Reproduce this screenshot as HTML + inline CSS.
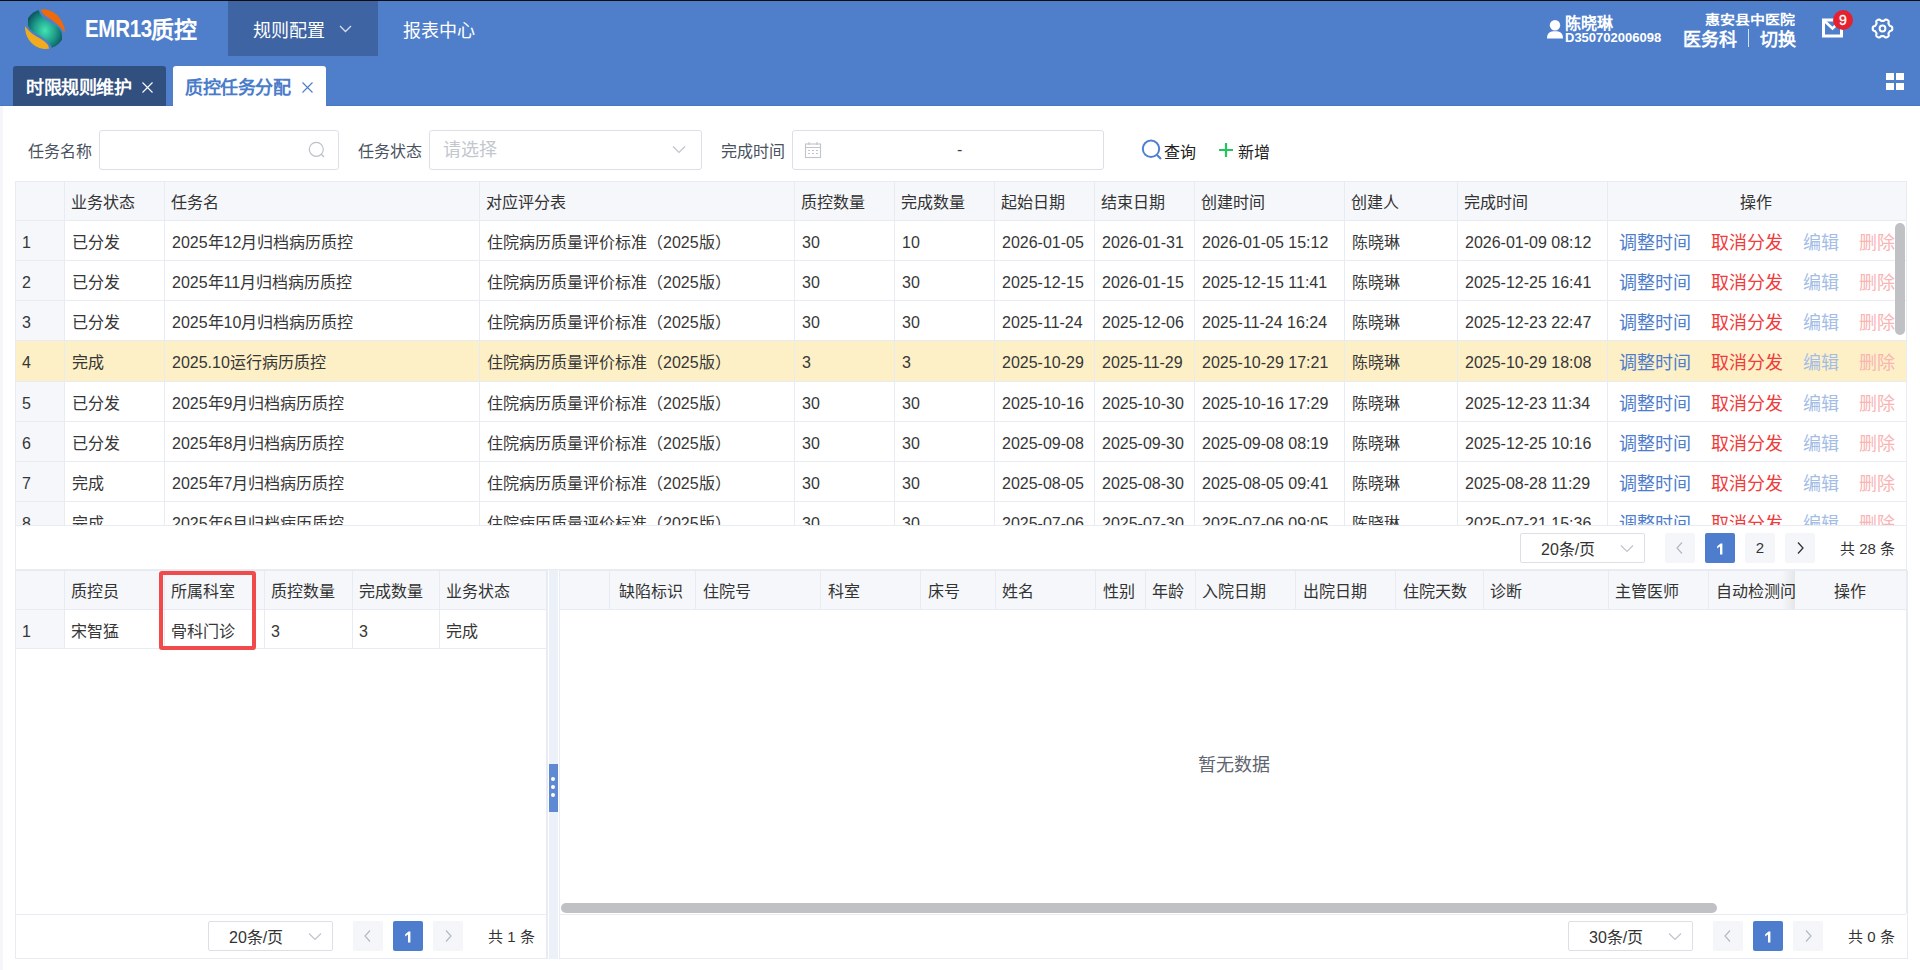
<!DOCTYPE html><html lang="zh-CN"><head><meta charset="utf-8"><style>
*{box-sizing:border-box;margin:0;padding:0}
html,body{width:1920px;height:970px;overflow:hidden;background:#fff;font-family:"Liberation Sans",sans-serif;color:#333}
.abs{position:absolute}
.w{color:#fff}
.t16{font-size:16px;line-height:20px;white-space:nowrap}
.t18{font-size:18px;line-height:22px;white-space:nowrap}
.lbl{font-size:16px;color:#4a5260;line-height:20px;white-space:nowrap}
.inp{border:1px solid #dcdfe6;border-radius:3px;background:#fff}
.hl{background:#e9edf4}
.th{background:#f5f7fa}
.cell{position:absolute;margin-top:2px;font-size:16px;line-height:20px;white-space:nowrap;color:#363636}
.hd{color:#333}
.blue{color:#4d7dcc}
.red{color:#f03c3c}
.lblue{color:#a3bde6}
.lred{color:#f9b4b4}
.pgbtn{position:absolute;width:30px;height:30px;background:#f4f6fa;border-radius:2px}
.pgact{background:#4d7dcc;color:#fff;font-weight:bold;font-size:16px;text-align:center;line-height:31px}
.sel{position:absolute;border:1px solid #dcdfe6;border-radius:2px;background:#fff;font-size:16px;line-height:32px;color:#333}
</style></head><body>
<div class="abs" style="left:0;top:0;width:1920px;height:1px;background:#0d0d0d"></div>
<div class="abs" style="left:0;top:1px;width:1920px;height:105px;background:#4f7fcb"></div>
<div class="abs" style="left:0;top:105px;width:1920px;height:1px;background:#4877c4"></div>
<div class="abs" style="left:228px;top:1px;width:150px;height:55px;background:#3e64a3"></div>
<svg class="abs" style="left:25px;top:9px" width="40" height="40" viewBox="0 0 40 40">
<defs><radialGradient id="tg" cx="0.5" cy="0.55" r="0.6"><stop offset="0" stop-color="#43e3b4"/><stop offset="0.55" stop-color="#1d9a88"/><stop offset="1" stop-color="#064c58"/></radialGradient>
<clipPath id="cc"><circle cx="20" cy="20" r="20"/></clipPath></defs>
<g clip-path="url(#cc)">
<path d="M3,2 C10,-2 14,1 14,2 C16,8 22,12 28,15 C34,18 37,22 37,27 L37,34 C33,38 30,39 27,39 C24,32 18,28 12,25 C6,22 3,19 3,15 Z" fill="url(#tg)"/>
<path d="M16,0 C28,0 38,8 40,22 L40,24 C36,18 30,13 24,9 C20,7 16,4 16,0 Z" fill="#ee6a0a"/>
<path d="M0,17 C4,23 10,27 16,30 C21,33 24,36 24,40 L18,40 C8,38 1,30 0,20 Z" fill="#f0ac1c"/>
</g></svg>
<div class="abs w" style="left:85px;top:17px;font-size:20.5px;line-height:26px;font-weight:bold;white-space:nowrap;letter-spacing:-0.3px;transform:scaleY(1.13);transform-origin:0 19px">EMR13</div>
<div class="abs w" style="left:151px;top:17px;font-size:23px;line-height:26px;font-weight:bold;white-space:nowrap">质控</div>
<div class="abs w t18" style="left:253px;top:20px">规则配置</div>
<svg class="abs" style="left:339px;top:25px" width="13" height="8" viewBox="0 0 13 8"><path d="M1,1 L6.5,6.5 L12,1" fill="none" stroke="#d6def0" stroke-width="1.3"/></svg>
<div class="abs w t18" style="left:403px;top:20px">报表中心</div>
<svg class="abs" style="left:1547px;top:20px" width="16" height="19" viewBox="0 0 16 19"><circle cx="8" cy="5.2" r="5.2" fill="#fff"/><path d="M0,18.5 C0,13 3,11.3 8,11.3 C13,11.3 16,13 16,18.5 Z" fill="#fff"/></svg>
<div class="abs w" style="left:1565px;top:15px;font-size:16px;line-height:18px;font-weight:bold;white-space:nowrap">陈晓琳</div>
<div class="abs w" style="left:1565px;top:30px;font-size:13px;line-height:16px;font-weight:bold;white-space:nowrap">D350702006098</div>
<div class="abs w" style="left:1705px;top:11px;font-size:15px;line-height:18px;font-weight:bold;white-space:nowrap;transform:scaleY(0.86);transform-origin:0 9px">惠安县中医院</div>
<div class="abs w" style="left:1683px;top:29px;font-size:18px;line-height:22px;font-weight:bold;white-space:nowrap">医务科</div>
<div class="abs" style="left:1748px;top:29px;width:1px;height:18px;background:#d8e0f0"></div>
<div class="abs w" style="left:1760px;top:29px;font-size:18px;line-height:22px;font-weight:bold;white-space:nowrap">切换</div>
<svg class="abs" style="left:1821px;top:17px" width="24" height="23" viewBox="0 0 24 23"><rect x="2.5" y="3" width="18" height="16" fill="none" stroke="#fff" stroke-width="3"/><path d="M3,3.5 L11.5,11.5 L20,3.5" fill="none" stroke="#fff" stroke-width="2.6"/></svg>
<div class="abs" style="left:1833px;top:10px;width:20px;height:20px;border-radius:50%;background:#e4222f;color:#fff;font-size:14px;line-height:20px;text-align:center;font-weight:normal;-webkit-text-stroke:0.3px #fff">9</div>
<svg class="abs" style="left:1870px;top:15.5px" width="25" height="25" viewBox="0 0 25 25"><path d="M22.30,12.50 L22.29,12.93 L22.24,13.35 L22.15,13.77 L21.96,14.17 L21.56,14.51 L20.90,14.75 L20.24,14.94 L19.83,15.17 L19.59,15.43 L19.41,15.72 L19.25,16.01 L19.08,16.30 L18.91,16.59 L18.74,16.87 L18.58,17.17 L18.47,17.51 L18.49,17.99 L18.65,18.65 L18.77,19.34 L18.67,19.86 L18.42,20.22 L18.11,20.51 L17.76,20.76 L17.40,20.99 L17.02,21.19 L16.63,21.36 L16.22,21.49 L15.78,21.52 L15.29,21.35 L14.75,20.90 L14.26,20.43 L13.85,20.18 L13.50,20.10 L13.16,20.09 L12.83,20.10 L12.50,20.10 L12.17,20.10 L11.84,20.09 L11.50,20.10 L11.15,20.18 L10.74,20.43 L10.25,20.90 L9.71,21.35 L9.22,21.52 L8.78,21.49 L8.37,21.36 L7.98,21.19 L7.60,20.99 L7.24,20.76 L6.89,20.51 L6.58,20.22 L6.33,19.86 L6.23,19.34 L6.35,18.65 L6.51,17.99 L6.53,17.51 L6.42,17.17 L6.26,16.87 L6.09,16.59 L5.92,16.30 L5.75,16.01 L5.59,15.72 L5.41,15.43 L5.17,15.17 L4.76,14.94 L4.10,14.75 L3.44,14.51 L3.04,14.17 L2.85,13.77 L2.76,13.35 L2.71,12.93 L2.70,12.50 L2.71,12.07 L2.76,11.65 L2.85,11.23 L3.04,10.83 L3.44,10.49 L4.10,10.25 L4.76,10.06 L5.17,9.83 L5.41,9.57 L5.59,9.28 L5.75,8.99 L5.92,8.70 L6.09,8.41 L6.26,8.13 L6.42,7.83 L6.53,7.49 L6.51,7.01 L6.35,6.35 L6.23,5.66 L6.33,5.14 L6.58,4.78 L6.89,4.49 L7.24,4.24 L7.60,4.01 L7.98,3.81 L8.37,3.64 L8.78,3.51 L9.22,3.48 L9.71,3.65 L10.25,4.10 L10.74,4.57 L11.15,4.82 L11.50,4.90 L11.84,4.91 L12.17,4.90 L12.50,4.90 L12.83,4.90 L13.16,4.91 L13.50,4.90 L13.85,4.82 L14.26,4.57 L14.75,4.10 L15.29,3.65 L15.78,3.48 L16.22,3.51 L16.63,3.64 L17.02,3.81 L17.40,4.01 L17.76,4.24 L18.11,4.49 L18.42,4.78 L18.67,5.14 L18.77,5.66 L18.65,6.35 L18.49,7.01 L18.47,7.49 L18.58,7.83 L18.74,8.13 L18.91,8.41 L19.08,8.70 L19.25,8.99 L19.41,9.28 L19.59,9.57 L19.83,9.83 L20.24,10.06 L20.90,10.25 L21.56,10.49 L21.96,10.83 L22.15,11.23 L22.24,11.65 L22.29,12.07 L22.30,12.50Z" fill="none" stroke="#fff" stroke-width="2.1" stroke-linejoin="round"/><circle cx="12.5" cy="12.5" r="2.9" fill="none" stroke="#fff" stroke-width="2"/></svg>
<div class="abs" style="left:13px;top:66px;width:153px;height:40px;background:#32507f;border-radius:3px 3px 0 0"></div>
<div class="abs w t18" style="left:26px;top:77px;letter-spacing:-0.5px;font-weight:bold">时限规则维护</div>
<svg class="abs" style="left:141px;top:81px" width="13" height="13" viewBox="0 0 13 13"><path d="M1.5,1.5 L11.5,11.5 M11.5,1.5 L1.5,11.5" stroke="#fff" stroke-width="1.1"/></svg>
<div class="abs" style="left:173px;top:66px;width:153px;height:40px;background:#fff;border-radius:3px 3px 0 0"></div>
<div class="abs t18" style="left:185px;top:77px;letter-spacing:-0.4px;font-weight:bold;color:#4a7cca">质控任务分配</div>
<svg class="abs" style="left:301px;top:81px" width="13" height="13" viewBox="0 0 13 13"><path d="M1.5,1.5 L11.5,11.5 M11.5,1.5 L1.5,11.5" stroke="#4a7cca" stroke-width="1.1"/></svg>
<div class="abs" style="left:1886px;top:73px;width:8px;height:7px;background:#fff"></div>
<div class="abs" style="left:1896px;top:73px;width:8px;height:7px;background:#fff"></div>
<div class="abs" style="left:1886px;top:83px;width:8px;height:7px;background:#fff"></div>
<div class="abs" style="left:1896px;top:83px;width:8px;height:7px;background:#fff"></div>
<div class="abs" style="left:0;top:106px;width:3px;height:864px;background:#f4f6f9"></div>
<div class="abs lbl" style="left:28px;top:142px">任务名称</div>
<div class="abs inp" style="left:99px;top:130px;width:240px;height:40px"></div>
<svg class="abs" style="left:307px;top:140px" width="20" height="20" viewBox="0 0 20 20"><circle cx="9.3" cy="9.3" r="7" fill="none" stroke="#bcc1c9" stroke-width="1.2"/><path d="M14.3,14.3 L17,17" stroke="#bcc1c9" stroke-width="1.3"/></svg>
<div class="abs lbl" style="left:358px;top:142px">任务状态</div>
<div class="abs inp" style="left:429px;top:130px;width:273px;height:40px"></div>
<div class="abs" style="left:443px;top:139px;font-size:18px;line-height:22px;color:#c3c7ce;white-space:nowrap">请选择</div>
<svg class="abs" style="left:672px;top:145px" width="14" height="9" viewBox="0 0 14 9"><path d="M1,1.5 L7,7.5 L13,1.5" fill="none" stroke="#bfc3ca" stroke-width="1.2"/></svg>
<div class="abs lbl" style="left:721px;top:142px">完成时间</div>
<div class="abs inp" style="left:792px;top:130px;width:312px;height:40px"></div>
<svg class="abs" style="left:804px;top:141px" width="18" height="18" viewBox="0 0 18 18"><rect x="1.5" y="3" width="15" height="13.5" fill="none" stroke="#c0c4cc" stroke-width="1.1"/><path d="M1.5,6.5 H16.5 M5,1 V4 M13,1 V4" stroke="#c0c4cc" stroke-width="1.1"/><path d="M4,9.5 H6 M8,9.5 H10 M12,9.5 H14 M4,12.5 H6 M8,12.5 H10 M12,12.5 H14" stroke="#c0c4cc" stroke-width="1"/></svg>
<div class="abs" style="left:957px;top:140px;font-size:16px;line-height:20px;color:#444">-</div>
<svg class="abs" style="left:1141px;top:139px" width="22" height="22" viewBox="0 0 22 22"><circle cx="10" cy="9.8" r="8.2" fill="none" stroke="#4f7fd0" stroke-width="2"/><path d="M16,16 L20,20" stroke="#4f7fd0" stroke-width="2.2"/></svg>
<div class="abs t16" style="left:1164px;top:143px;color:#222">查询</div>
<svg class="abs" style="left:1218px;top:142px" width="16" height="16" viewBox="0 0 16 16"><path d="M8,1 V15 M1,8 H15" stroke="#22c55e" stroke-width="2.2"/></svg>
<div class="abs t16" style="left:1238px;top:143px;color:#222">新增</div>
<div class="abs" style="left:15px;top:181px;width:1892px;height:389px;border:1px solid #e8ebf2;border-bottom:none"></div>
<div class="abs th" style="left:16px;top:182px;width:1890px;height:38px"></div>
<div class="abs" style="left:16px;top:220px;width:1890px;height:1px;background:#e8ebf2"></div>
<div class="abs" style="left:16px;top:221px;width:1890px;height:304px;overflow:hidden">
<div class="abs th" style="left:0;top:0;width:48px;height:330px"></div>
<div class="abs" style="left:0;top:39px;width:1890px;height:1px;background:#e8ebf2"></div>
<div class="cell" style="left:6px;top:10px">1</div>
<div class="cell" style="left:56px;top:10px">已分发</div>
<div class="cell" style="left:156px;top:10px">2025年12月归档病历质控</div>
<div class="cell" style="left:471px;top:10px">住院病历质量评价标准（2025版）</div>
<div class="cell" style="left:786px;top:10px">30</div>
<div class="cell" style="left:886px;top:10px">10</div>
<div class="cell" style="left:986px;top:10px">2026-01-05</div>
<div class="cell" style="left:1086px;top:10px">2026-01-31</div>
<div class="cell" style="left:1186px;top:10px">2026-01-05 15:12</div>
<div class="cell" style="left:1336px;top:10px">陈晓琳</div>
<div class="cell" style="left:1449px;top:10px">2026-01-09 08:12</div>
<div class="cell t18 blue" style="left:1603px;top:9px;font-size:18px;line-height:22px">调整时间</div>
<div class="cell t18 red" style="left:1695px;top:9px;font-size:18px;line-height:22px">取消分发</div>
<div class="cell t18 lblue" style="left:1787px;top:9px;font-size:18px;line-height:22px">编辑</div>
<div class="cell t18 lred" style="left:1843px;top:9px;font-size:18px;line-height:22px;width:36px;overflow:hidden">删除</div>
<div class="abs" style="left:0;top:79px;width:1890px;height:1px;background:#e8ebf2"></div>
<div class="cell" style="left:6px;top:50px">2</div>
<div class="cell" style="left:56px;top:50px">已分发</div>
<div class="cell" style="left:156px;top:50px">2025年11月归档病历质控</div>
<div class="cell" style="left:471px;top:50px">住院病历质量评价标准（2025版）</div>
<div class="cell" style="left:786px;top:50px">30</div>
<div class="cell" style="left:886px;top:50px">30</div>
<div class="cell" style="left:986px;top:50px">2025-12-15</div>
<div class="cell" style="left:1086px;top:50px">2026-01-15</div>
<div class="cell" style="left:1186px;top:50px">2025-12-15 11:41</div>
<div class="cell" style="left:1336px;top:50px">陈晓琳</div>
<div class="cell" style="left:1449px;top:50px">2025-12-25 16:41</div>
<div class="cell t18 blue" style="left:1603px;top:49px;font-size:18px;line-height:22px">调整时间</div>
<div class="cell t18 red" style="left:1695px;top:49px;font-size:18px;line-height:22px">取消分发</div>
<div class="cell t18 lblue" style="left:1787px;top:49px;font-size:18px;line-height:22px">编辑</div>
<div class="cell t18 lred" style="left:1843px;top:49px;font-size:18px;line-height:22px;width:36px;overflow:hidden">删除</div>
<div class="abs" style="left:0;top:119px;width:1890px;height:1px;background:#e8ebf2"></div>
<div class="cell" style="left:6px;top:90px">3</div>
<div class="cell" style="left:56px;top:90px">已分发</div>
<div class="cell" style="left:156px;top:90px">2025年10月归档病历质控</div>
<div class="cell" style="left:471px;top:90px">住院病历质量评价标准（2025版）</div>
<div class="cell" style="left:786px;top:90px">30</div>
<div class="cell" style="left:886px;top:90px">30</div>
<div class="cell" style="left:986px;top:90px">2025-11-24</div>
<div class="cell" style="left:1086px;top:90px">2025-12-06</div>
<div class="cell" style="left:1186px;top:90px">2025-11-24 16:24</div>
<div class="cell" style="left:1336px;top:90px">陈晓琳</div>
<div class="cell" style="left:1449px;top:90px">2025-12-23 22:47</div>
<div class="cell t18 blue" style="left:1603px;top:89px;font-size:18px;line-height:22px">调整时间</div>
<div class="cell t18 red" style="left:1695px;top:89px;font-size:18px;line-height:22px">取消分发</div>
<div class="cell t18 lblue" style="left:1787px;top:89px;font-size:18px;line-height:22px">编辑</div>
<div class="cell t18 lred" style="left:1843px;top:89px;font-size:18px;line-height:22px;width:36px;overflow:hidden">删除</div>
<div class="abs" style="left:0;top:120px;width:1890px;height:40px;background:#fdf0c6"></div>
<div class="abs" style="left:0;top:160px;width:1890px;height:1px;background:#e8ebf2"></div>
<div class="cell" style="left:6px;top:130px">4</div>
<div class="cell" style="left:56px;top:130px">完成</div>
<div class="cell" style="left:156px;top:130px">2025.10运行病历质控</div>
<div class="cell" style="left:471px;top:130px">住院病历质量评价标准（2025版）</div>
<div class="cell" style="left:786px;top:130px">3</div>
<div class="cell" style="left:886px;top:130px">3</div>
<div class="cell" style="left:986px;top:130px">2025-10-29</div>
<div class="cell" style="left:1086px;top:130px">2025-11-29</div>
<div class="cell" style="left:1186px;top:130px">2025-10-29 17:21</div>
<div class="cell" style="left:1336px;top:130px">陈晓琳</div>
<div class="cell" style="left:1449px;top:130px">2025-10-29 18:08</div>
<div class="cell t18 blue" style="left:1603px;top:129px;font-size:18px;line-height:22px">调整时间</div>
<div class="cell t18 red" style="left:1695px;top:129px;font-size:18px;line-height:22px">取消分发</div>
<div class="cell t18 lblue" style="left:1787px;top:129px;font-size:18px;line-height:22px">编辑</div>
<div class="cell t18 lred" style="left:1843px;top:129px;font-size:18px;line-height:22px;width:36px;overflow:hidden">删除</div>
<div class="abs" style="left:0;top:200px;width:1890px;height:1px;background:#e8ebf2"></div>
<div class="cell" style="left:6px;top:171px">5</div>
<div class="cell" style="left:56px;top:171px">已分发</div>
<div class="cell" style="left:156px;top:171px">2025年9月归档病历质控</div>
<div class="cell" style="left:471px;top:171px">住院病历质量评价标准（2025版）</div>
<div class="cell" style="left:786px;top:171px">30</div>
<div class="cell" style="left:886px;top:171px">30</div>
<div class="cell" style="left:986px;top:171px">2025-10-16</div>
<div class="cell" style="left:1086px;top:171px">2025-10-30</div>
<div class="cell" style="left:1186px;top:171px">2025-10-16 17:29</div>
<div class="cell" style="left:1336px;top:171px">陈晓琳</div>
<div class="cell" style="left:1449px;top:171px">2025-12-23 11:34</div>
<div class="cell t18 blue" style="left:1603px;top:170px;font-size:18px;line-height:22px">调整时间</div>
<div class="cell t18 red" style="left:1695px;top:170px;font-size:18px;line-height:22px">取消分发</div>
<div class="cell t18 lblue" style="left:1787px;top:170px;font-size:18px;line-height:22px">编辑</div>
<div class="cell t18 lred" style="left:1843px;top:170px;font-size:18px;line-height:22px;width:36px;overflow:hidden">删除</div>
<div class="abs" style="left:0;top:240px;width:1890px;height:1px;background:#e8ebf2"></div>
<div class="cell" style="left:6px;top:211px">6</div>
<div class="cell" style="left:56px;top:211px">已分发</div>
<div class="cell" style="left:156px;top:211px">2025年8月归档病历质控</div>
<div class="cell" style="left:471px;top:211px">住院病历质量评价标准（2025版）</div>
<div class="cell" style="left:786px;top:211px">30</div>
<div class="cell" style="left:886px;top:211px">30</div>
<div class="cell" style="left:986px;top:211px">2025-09-08</div>
<div class="cell" style="left:1086px;top:211px">2025-09-30</div>
<div class="cell" style="left:1186px;top:211px">2025-09-08 08:19</div>
<div class="cell" style="left:1336px;top:211px">陈晓琳</div>
<div class="cell" style="left:1449px;top:211px">2025-12-25 10:16</div>
<div class="cell t18 blue" style="left:1603px;top:210px;font-size:18px;line-height:22px">调整时间</div>
<div class="cell t18 red" style="left:1695px;top:210px;font-size:18px;line-height:22px">取消分发</div>
<div class="cell t18 lblue" style="left:1787px;top:210px;font-size:18px;line-height:22px">编辑</div>
<div class="cell t18 lred" style="left:1843px;top:210px;font-size:18px;line-height:22px;width:36px;overflow:hidden">删除</div>
<div class="abs" style="left:0;top:280px;width:1890px;height:1px;background:#e8ebf2"></div>
<div class="cell" style="left:6px;top:251px">7</div>
<div class="cell" style="left:56px;top:251px">完成</div>
<div class="cell" style="left:156px;top:251px">2025年7月归档病历质控</div>
<div class="cell" style="left:471px;top:251px">住院病历质量评价标准（2025版）</div>
<div class="cell" style="left:786px;top:251px">30</div>
<div class="cell" style="left:886px;top:251px">30</div>
<div class="cell" style="left:986px;top:251px">2025-08-05</div>
<div class="cell" style="left:1086px;top:251px">2025-08-30</div>
<div class="cell" style="left:1186px;top:251px">2025-08-05 09:41</div>
<div class="cell" style="left:1336px;top:251px">陈晓琳</div>
<div class="cell" style="left:1449px;top:251px">2025-08-28 11:29</div>
<div class="cell t18 blue" style="left:1603px;top:250px;font-size:18px;line-height:22px">调整时间</div>
<div class="cell t18 red" style="left:1695px;top:250px;font-size:18px;line-height:22px">取消分发</div>
<div class="cell t18 lblue" style="left:1787px;top:250px;font-size:18px;line-height:22px">编辑</div>
<div class="cell t18 lred" style="left:1843px;top:250px;font-size:18px;line-height:22px;width:36px;overflow:hidden">删除</div>
<div class="abs" style="left:0;top:320px;width:1890px;height:1px;background:#e8ebf2"></div>
<div class="cell" style="left:6px;top:291px">8</div>
<div class="cell" style="left:56px;top:291px">完成</div>
<div class="cell" style="left:156px;top:291px">2025年6月归档病历质控</div>
<div class="cell" style="left:471px;top:291px">住院病历质量评价标准（2025版）</div>
<div class="cell" style="left:786px;top:291px">30</div>
<div class="cell" style="left:886px;top:291px">30</div>
<div class="cell" style="left:986px;top:291px">2025-07-06</div>
<div class="cell" style="left:1086px;top:291px">2025-07-30</div>
<div class="cell" style="left:1186px;top:291px">2025-07-06 09:05</div>
<div class="cell" style="left:1336px;top:291px">陈晓琳</div>
<div class="cell" style="left:1449px;top:291px">2025-07-21 15:36</div>
<div class="cell t18 blue" style="left:1603px;top:290px;font-size:18px;line-height:22px">调整时间</div>
<div class="cell t18 red" style="left:1695px;top:290px;font-size:18px;line-height:22px">取消分发</div>
<div class="cell t18 lblue" style="left:1787px;top:290px;font-size:18px;line-height:22px">编辑</div>
<div class="cell t18 lred" style="left:1843px;top:290px;font-size:18px;line-height:22px;width:36px;overflow:hidden">删除</div>
<div class="abs" style="left:48px;top:0;width:1px;height:330px;background:#e8ebf2"></div>
<div class="abs" style="left:148px;top:0;width:1px;height:330px;background:#e8ebf2"></div>
<div class="abs" style="left:463px;top:0;width:1px;height:330px;background:#e8ebf2"></div>
<div class="abs" style="left:778px;top:0;width:1px;height:330px;background:#e8ebf2"></div>
<div class="abs" style="left:878px;top:0;width:1px;height:330px;background:#e8ebf2"></div>
<div class="abs" style="left:978px;top:0;width:1px;height:330px;background:#e8ebf2"></div>
<div class="abs" style="left:1078px;top:0;width:1px;height:330px;background:#e8ebf2"></div>
<div class="abs" style="left:1178px;top:0;width:1px;height:330px;background:#e8ebf2"></div>
<div class="abs" style="left:1328px;top:0;width:1px;height:330px;background:#e8ebf2"></div>
<div class="abs" style="left:1441px;top:0;width:1px;height:330px;background:#e8ebf2"></div>
<div class="abs" style="left:1591px;top:0;width:1px;height:330px;background:#e8ebf2"></div>
<div class="abs" style="left:1879px;top:2px;width:10px;height:112px;border-radius:5px;background:#bfc1c4"></div>
</div>
<div class="abs" style="left:64px;top:182px;width:1px;height:38px;background:#e8ebf2"></div>
<div class="abs" style="left:164px;top:182px;width:1px;height:38px;background:#e8ebf2"></div>
<div class="abs" style="left:479px;top:182px;width:1px;height:38px;background:#e8ebf2"></div>
<div class="abs" style="left:794px;top:182px;width:1px;height:38px;background:#e8ebf2"></div>
<div class="abs" style="left:894px;top:182px;width:1px;height:38px;background:#e8ebf2"></div>
<div class="abs" style="left:994px;top:182px;width:1px;height:38px;background:#e8ebf2"></div>
<div class="abs" style="left:1094px;top:182px;width:1px;height:38px;background:#e8ebf2"></div>
<div class="abs" style="left:1194px;top:182px;width:1px;height:38px;background:#e8ebf2"></div>
<div class="abs" style="left:1344px;top:182px;width:1px;height:38px;background:#e8ebf2"></div>
<div class="abs" style="left:1457px;top:182px;width:1px;height:38px;background:#e8ebf2"></div>
<div class="abs" style="left:1607px;top:182px;width:1px;height:38px;background:#e8ebf2"></div>
<div class="cell hd" style="left:71px;top:191px">业务状态</div>
<div class="cell hd" style="left:171px;top:191px">任务名</div>
<div class="cell hd" style="left:486px;top:191px">对应评分表</div>
<div class="cell hd" style="left:801px;top:191px">质控数量</div>
<div class="cell hd" style="left:901px;top:191px">完成数量</div>
<div class="cell hd" style="left:1001px;top:191px">起始日期</div>
<div class="cell hd" style="left:1101px;top:191px">结束日期</div>
<div class="cell hd" style="left:1201px;top:191px">创建时间</div>
<div class="cell hd" style="left:1351px;top:191px">创建人</div>
<div class="cell hd" style="left:1464px;top:191px">完成时间</div>
<div class="cell hd" style="left:1740px;top:191px">操作</div>
<div class="abs" style="left:16px;top:525px;width:1890px;height:1px;background:#e8ebf2"></div>
<div class="sel" style="left:1520px;top:533px;width:125px;height:30px;padding-left:20px">20条/页</div>
<svg class="abs" style="left:1620px;top:543.5px" width="14" height="9" viewBox="0 0 14 9"><path d="M1,1.5 L7,7.5 L13,1.5" fill="none" stroke="#c0c4cc" stroke-width="1.2"/></svg>
<div class="pgbtn" style="left:1665px;top:533px"></div>
<svg class="abs" style="left:1675px;top:541px" width="10" height="14" viewBox="0 0 10 14"><path d="M7,1.5 L2,7 L7,12.5" fill="none" stroke="#b4b8bf" stroke-width="1.2"/></svg>
<div class="pgbtn pgact" style="left:1705px;top:533px"><svg width="30" height="30" viewBox="0 0 30 30" style="display:block"><path d="M12.2,13.2 L15.6,10.5 H17.4 V21.5 H15 V13.6 L12.2,15.4 Z" fill="#fff"/></svg></div>
<div class="pgbtn" style="left:1745px;top:533px;text-align:center;font-size:15px;line-height:29px;color:#333">2</div>
<div class="pgbtn" style="left:1785px;top:533px"></div>
<svg class="abs" style="left:1795px;top:541px" width="10" height="14" viewBox="0 0 10 14"><path d="M3,1.5 L8,7 L3,12.5" fill="none" stroke="#333" stroke-width="1.3"/></svg>
<div class="cell" style="left:1840px;top:537px;color:#333;font-size:15px">共 28 条</div>
<div class="abs" style="left:15px;top:569px;width:1892px;height:1px;background:#e8ebf2"></div>
<div class="abs" style="left:15px;top:570px;width:533px;height:389px;border:1px solid #e8ebf2"></div>
<div class="abs th" style="left:16px;top:571px;width:531px;height:38px"></div>
<div class="abs" style="left:16px;top:609px;width:531px;height:1px;background:#e8ebf2"></div>
<div class="abs th" style="left:16px;top:610px;width:48px;height:38px"></div>
<div class="abs" style="left:16px;top:648px;width:531px;height:1px;background:#e8ebf2"></div>
<div class="abs" style="left:64px;top:571px;width:1px;height:77px;background:#e8ebf2"></div>
<div class="abs" style="left:164px;top:571px;width:1px;height:77px;background:#e8ebf2"></div>
<div class="abs" style="left:264px;top:571px;width:1px;height:77px;background:#e8ebf2"></div>
<div class="abs" style="left:352px;top:571px;width:1px;height:77px;background:#e8ebf2"></div>
<div class="abs" style="left:439px;top:571px;width:1px;height:77px;background:#e8ebf2"></div>
<div class="cell hd" style="left:71px;top:580px">质控员</div>
<div class="cell hd" style="left:171px;top:580px">所属科室</div>
<div class="cell hd" style="left:271px;top:580px">质控数量</div>
<div class="cell hd" style="left:359px;top:580px">完成数量</div>
<div class="cell hd" style="left:446px;top:580px">业务状态</div>
<div class="cell" style="left:22px;top:620px">1</div>
<div class="cell" style="left:71px;top:620px">宋智猛</div>
<div class="cell" style="left:171px;top:620px">骨科门诊</div>
<div class="cell" style="left:271px;top:620px">3</div>
<div class="cell" style="left:359px;top:620px">3</div>
<div class="cell" style="left:446px;top:620px">完成</div>
<div class="abs" style="left:159px;top:571px;width:97px;height:79px;border:4px solid #f04a4a;border-radius:3px"></div>
<div class="abs" style="left:16px;top:914px;width:531px;height:1px;background:#e8ebf2"></div>
<div class="sel" style="left:208px;top:921px;width:125px;height:30px;padding-left:20px">20条/页</div>
<svg class="abs" style="left:308px;top:932px" width="14" height="9" viewBox="0 0 14 9"><path d="M1,1.5 L7,7.5 L13,1.5" fill="none" stroke="#c0c4cc" stroke-width="1.2"/></svg>
<div class="pgbtn" style="left:353px;top:921px"></div>
<svg class="abs" style="left:363px;top:929px" width="10" height="14" viewBox="0 0 10 14"><path d="M7,1.5 L2,7 L7,12.5" fill="none" stroke="#b4b8bf" stroke-width="1.2"/></svg>
<div class="pgbtn pgact" style="left:393px;top:921px"><svg width="30" height="30" viewBox="0 0 30 30" style="display:block"><path d="M12.2,13.2 L15.6,10.5 H17.4 V21.5 H15 V13.6 L12.2,15.4 Z" fill="#fff"/></svg></div>
<div class="pgbtn" style="left:433px;top:921px"></div>
<svg class="abs" style="left:443px;top:929px" width="10" height="14" viewBox="0 0 10 14"><path d="M3,1.5 L8,7 L3,12.5" fill="none" stroke="#b4b8bf" stroke-width="1.2"/></svg>
<div class="cell" style="left:488px;top:925px;color:#333;font-size:15px">共 1 条</div>
<div class="abs" style="left:546px;top:571px;width:1px;height:387px;background:#e8ebf2"></div>
<div class="abs" style="left:549px;top:570px;width:9px;height:389px;background:#ebf0f9"></div>
<div class="abs" style="left:549px;top:764px;width:9px;height:48px;background:#5f8ad3"></div>
<div class="abs" style="left:550.5px;top:777px;width:4px;height:4px;border-radius:50%;background:#fff"></div>
<div class="abs" style="left:550.5px;top:785px;width:4px;height:4px;border-radius:50%;background:#fff"></div>
<div class="abs" style="left:550.5px;top:793px;width:4px;height:4px;border-radius:50%;background:#fff"></div>
<div class="abs" style="left:559px;top:570px;width:1349px;height:389px;border:1px solid #e8ebf2"></div>
<div class="abs" style="left:1906px;top:571px;width:1px;height:343px;background:#e8ebf2"></div>
<div class="abs th" style="left:560px;top:571px;width:1346px;height:38px"></div>
<div class="abs" style="left:560px;top:609px;width:1346px;height:1px;background:#e8ebf2"></div>
<div class="abs" style="left:609px;top:571px;width:1px;height:38px;background:#e8ebf2"></div>
<div class="abs" style="left:695px;top:571px;width:1px;height:38px;background:#e8ebf2"></div>
<div class="abs" style="left:820px;top:571px;width:1px;height:38px;background:#e8ebf2"></div>
<div class="abs" style="left:920px;top:571px;width:1px;height:38px;background:#e8ebf2"></div>
<div class="abs" style="left:995px;top:571px;width:1px;height:38px;background:#e8ebf2"></div>
<div class="abs" style="left:1095px;top:571px;width:1px;height:38px;background:#e8ebf2"></div>
<div class="abs" style="left:1145px;top:571px;width:1px;height:38px;background:#e8ebf2"></div>
<div class="abs" style="left:1195px;top:571px;width:1px;height:38px;background:#e8ebf2"></div>
<div class="abs" style="left:1295px;top:571px;width:1px;height:38px;background:#e8ebf2"></div>
<div class="abs" style="left:1395px;top:571px;width:1px;height:38px;background:#e8ebf2"></div>
<div class="abs" style="left:1483px;top:571px;width:1px;height:38px;background:#e8ebf2"></div>
<div class="abs" style="left:1608px;top:571px;width:1px;height:38px;background:#e8ebf2"></div>
<div class="abs" style="left:1708px;top:571px;width:1px;height:38px;background:#e8ebf2"></div>
<div class="cell hd" style="left:619px;top:580px">缺陷标识</div>
<div class="cell hd" style="left:703px;top:580px">住院号</div>
<div class="cell hd" style="left:828px;top:580px">科室</div>
<div class="cell hd" style="left:928px;top:580px">床号</div>
<div class="cell hd" style="left:1002px;top:580px">姓名</div>
<div class="cell hd" style="left:1103px;top:580px">性别</div>
<div class="cell hd" style="left:1152px;top:580px">年龄</div>
<div class="cell hd" style="left:1202px;top:580px">入院日期</div>
<div class="cell hd" style="left:1303px;top:580px">出院日期</div>
<div class="cell hd" style="left:1403px;top:580px">住院天数</div>
<div class="cell hd" style="left:1490px;top:580px">诊断</div>
<div class="cell hd" style="left:1615px;top:580px">主管医师</div>
<div class="cell hd" style="left:1716px;top:580px">自动检测问</div>
<div class="abs" style="left:1782px;top:571px;width:13px;height:38px;background:linear-gradient(to right,rgba(0,0,0,0),rgba(0,0,0,0.07))"></div>
<div class="abs th" style="left:1795px;top:571px;width:111px;height:38px"></div>
<div class="cell hd" style="left:1834px;top:580px">操作</div>
<div class="abs" style="left:1198px;top:754px;font-size:18px;line-height:22px;color:#5f6570;white-space:nowrap">暂无数据</div>
<div class="abs" style="left:561px;top:903px;width:1156px;height:10px;border-radius:5px;background:#bfc1c4"></div>
<div class="abs" style="left:560px;top:914px;width:1346px;height:1px;background:#e8ebf2"></div>
<div class="sel" style="left:1568px;top:921px;width:125px;height:30px;padding-left:20px">30条/页</div>
<svg class="abs" style="left:1668px;top:932px" width="14" height="9" viewBox="0 0 14 9"><path d="M1,1.5 L7,7.5 L13,1.5" fill="none" stroke="#c0c4cc" stroke-width="1.2"/></svg>
<div class="pgbtn" style="left:1713px;top:921px"></div>
<svg class="abs" style="left:1723px;top:929px" width="10" height="14" viewBox="0 0 10 14"><path d="M7,1.5 L2,7 L7,12.5" fill="none" stroke="#b4b8bf" stroke-width="1.2"/></svg>
<div class="pgbtn pgact" style="left:1753px;top:921px"><svg width="30" height="30" viewBox="0 0 30 30" style="display:block"><path d="M12.2,13.2 L15.6,10.5 H17.4 V21.5 H15 V13.6 L12.2,15.4 Z" fill="#fff"/></svg></div>
<div class="pgbtn" style="left:1793px;top:921px"></div>
<svg class="abs" style="left:1803px;top:929px" width="10" height="14" viewBox="0 0 10 14"><path d="M3,1.5 L8,7 L3,12.5" fill="none" stroke="#b4b8bf" stroke-width="1.2"/></svg>
<div class="cell" style="left:1848px;top:925px;color:#333;font-size:15px">共 0 条</div>
</body></html>
